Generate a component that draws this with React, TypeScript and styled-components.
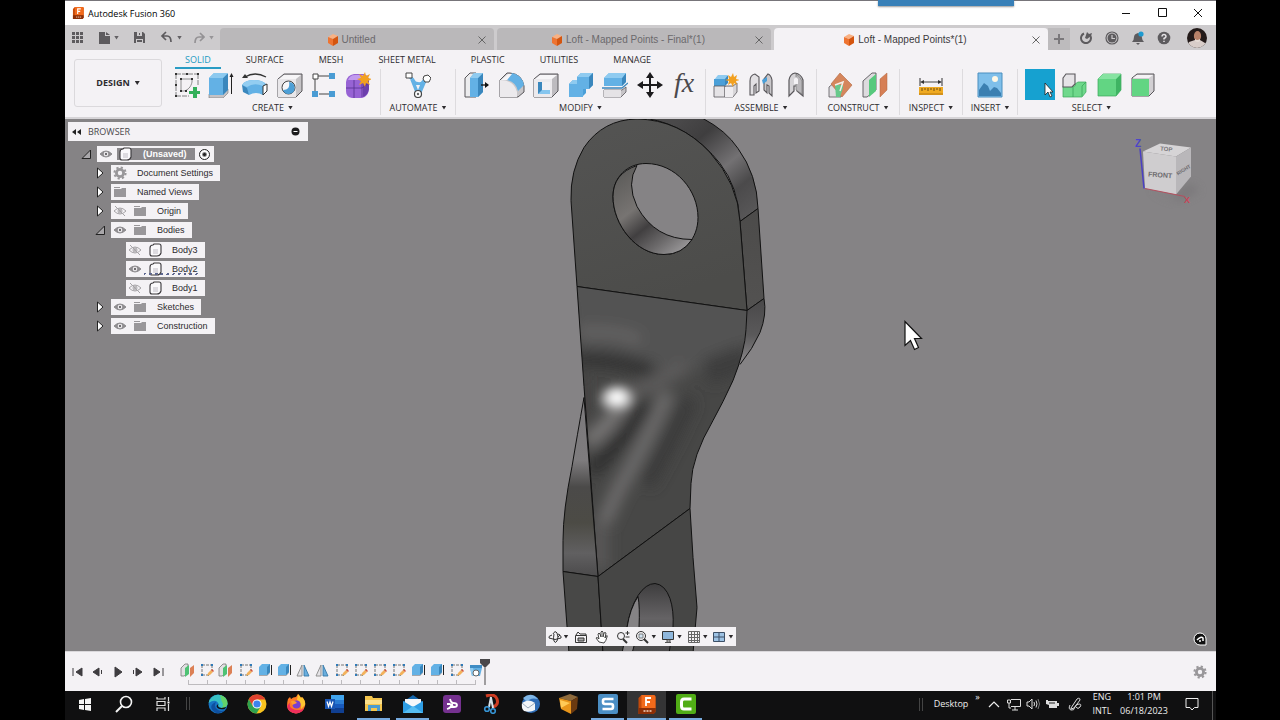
import React from "react";
import styled, { createGlobalStyle } from "styled-components";

const SANS = '"Liberation Sans", Arial, sans-serif';
const SYSTEM = '"Open Sans", "Noto Sans", sans-serif';

const GlobalStyle = createGlobalStyle`
  * { box-sizing: border-box; }
  body { margin: 0; background: #000; font-family: ${SANS}; }
  button { font: inherit; color: inherit; background: none; border: 0; padding: 0; margin: 0; }
  svg { display: block; flex: none; }
  ul { list-style: none; margin: 0; padding: 0; }
`;

const Screen = styled.div`
  display: flex;
  flex-direction: column;
  min-height: 100vh;
  padding: 0 64px 0 65px;
  overflow: hidden;
`;

/* ---------- title bar ---------- */

const TitleBar = styled.header`
  position: relative;
  display: flex;
  align-items: center;
  height: 25px;
  padding: 0 12px 0 7px;
  background: #fff;
  border-top: 1px solid #77757a;
  font: 9px ${SYSTEM};
  color: #000;
`;

const AppTitle = styled.span`
  flex: 1;
  margin-left: 4px;
`;

const SharingTab = styled.div`
  position: absolute;
  top: -1px;
  right: 202px;
  width: 136px;
  height: 6px;
  background: #3880b8;
  box-shadow: 0 1px 2px #0006;
`;

const WindowButtons = styled.div`
  display: flex;
  gap: 24px;
`;

/* ---------- document tabs ---------- */

const DocumentStrip = styled.div`
  display: flex;
  height: 25px;
  background: #cdcbcd;
  color: #636164;
`;

const QuickAccess = styled.div`
  display: flex;
  align-items: center;
  width: 155px;
  padding-left: 7px;
`;

const QuickButton = styled.button<{ $gap: number; $dim?: boolean }>`
  display: flex;
  align-items: center;
  gap: 4px;
  margin-right: ${(p) => p.$gap}px;
  opacity: ${(p) => (p.$dim ? 0.5 : 1)};
`;

const DocumentTabs = styled.div`
  display: flex;
  flex: 1;
  gap: 3px;
  padding-top: 3px;
`;

const DocumentTab = styled.div<{ $active?: boolean }>`
  display: flex;
  flex: 1;
  align-items: center;
  padding: 2px 8px 0 4px;
  border-radius: 4px 4px 0 0;
  background: ${(p) => (p.$active ? "#f4f2f5" : "#bab8ba")};
  color: ${(p) => (p.$active ? "#3c3a3d" : "#6b696c")};
`;

const DocumentName = styled.button`
  display: flex;
  flex: 1;
  align-items: center;
  justify-content: center;
  gap: 3px;
  font-size: 10px;
  line-height: 20px;
  white-space: nowrap;
`;

const Account = styled.div`
  display: flex;
  align-items: center;
  width: 168px;
  gap: 12px;
`;

const NewTab = styled.button`
  display: flex;
  align-items: center;
  justify-content: center;
  width: 22px;
  height: 22px;
  margin: 3px -3px 0 0;
  background: #bdbbbd;
`;

/* ---------- ribbon ---------- */

const Ribbon = styled.section`
  display: flex;
  height: 69px;
  padding: 0 0 0 9px;
  background: #f4f2f5;
  border-bottom: 2px solid #d6d4d7;
  color: #2e2c2f;
  font: 9px/12px ${SYSTEM};
`;

const Workspace = styled.button`
  display: flex;
  align-items: center;
  justify-content: center;
  gap: 5px;
  width: 88px;
  height: 48px;
  margin: 9px 9px 0 0;
  border: 1px solid #dbd9dc;
  border-radius: 3px;
  font-weight: bold;
`;

const RibbonBody = styled.div`
  flex: 1;
`;

const RibbonTabs = styled.nav`
  display: flex;
  gap: 15px;
  height: 19px;
  margin-left: 4px;
`;

const RibbonTab = styled.button<{ $active?: boolean }>`
  padding: 2px 10px 0;
  white-space: nowrap;
  color: ${(p) => (p.$active ? "#1c9ac2" : "inherit")};
  border-bottom: 2px solid ${(p) => (p.$active ? "#2a9cc4" : "transparent")};
`;

const Groups = styled.div`
  display: flex;
`;

const Group = styled.div<{ $width: number; $pad: string; $last?: boolean }>`
  display: flex;
  flex-direction: column;
  align-items: center;
  width: ${(p) => p.$width}px;
  height: 46px;
  padding: ${(p) => p.$pad};
  border-right: 1px solid ${(p) => (p.$last ? "transparent" : "#dddbde")};
`;

const Tools = styled.div<{ $single?: boolean }>`
  display: flex;
  align-self: stretch;
  justify-content: ${(p) => (p.$single ? "center" : "space-between")};
`;

const Tool = styled.button<{ $selected?: boolean }>`
  display: flex;
  align-items: center;
  justify-content: center;
  width: 30px;
  height: 31px;
  background: ${(p) => (p.$selected ? "#16a1d0" : "none")};
`;

const GroupMenu = styled.button`
  display: flex;
  align-items: center;
  gap: 4px;
  height: 15px;
  white-space: nowrap;
`;

const Caret = styled.span`
  width: 5px;
  height: 4px;
  background: currentColor;
  clip-path: polygon(0 0, 100% 0, 50% 100%);
`;

/* ---------- viewport ---------- */

const Viewport = styled.main`
  position: relative;
  flex: 1;
  min-height: 400px;
  padding: 3px;
  background: #858385;
`;

const Scene = styled.svg`
  position: absolute;
  inset: 0;
  width: 100%;
  height: 100%;
`;

const BrowserPanel = styled.aside`
  position: relative;
  width: 240px;
  font: 9px/16px ${SANS};
  color: #2c2a2d;
`;

const BrowserHeader = styled.div`
  display: flex;
  align-items: center;
  gap: 7px;
  height: 19px;
  padding: 0 8px 0 4px;
  background: #f4f2f5;
  font: 9px ${SYSTEM};
  color: #4a484b;
`;

const Grow = styled.span`
  flex: 1;
`;

const Tree = styled.ul`
  display: grid;
  align-content: space-between;
  height: 188px;
  margin-top: 5px;
`;

const TreeRow = styled.li<{ $indent: number }>`
  display: flex;
  align-items: center;
  height: 16px;
  padding-left: ${(p) => p.$indent}px;
`;

const Toggle = styled.button`
  display: flex;
  justify-content: center;
  width: 10px;
  margin-right: 6px;
`;

const Node = styled.div`
  display: flex;
  align-items: center;
  gap: 6px;
  height: 16px;
  padding: 0 7px 0 2px;
  background: #f4f2f5;
  white-space: nowrap;
`;

const NodeLabel = styled.span`
  margin-left: 4px;
`;

const RootLabel = styled.span`
  display: flex;
  align-items: center;
  gap: 11px;
  height: 12px;
  padding: 0 8px 0 1px;
  margin-left: -2px;
  background: #8b898c;
  color: #fff;
  font-weight: bold;
`;

const ActiveRadio = styled.input`
  appearance: none;
  width: 11px;
  height: 11px;
  margin: 0 -3px 0 -2px;
  border: 1px solid #222;
  border-radius: 50%;
  background: radial-gradient(circle, #222 0 1px, #fff 3px);
`;

const NavigationBar = styled.div`
  position: absolute;
  bottom: 5px;
  left: 50%;
  display: flex;
  align-items: center;
  justify-content: space-between;
  width: 190px;
  height: 19px;
  margin-left: -95px;
  padding: 0 2px;
  background: #f4f2f5;
  color: #2b292c;
`;

const NavigationTool = styled.button<{ $plain?: boolean }>`
  display: flex;
  align-items: center;
  gap: 2px;
  padding: 0 ${(p) => (p.$plain ? 1 : 0)}px;
`;

const AssistantButton = styled.button`
  position: absolute;
  right: 9px;
  bottom: 5px;
`;

/* ---------- timeline ---------- */

const Timeline = styled.footer`
  display: flex;
  align-items: center;
  height: 40px;
  padding: 0 9px 0 7px;
  background: #f4f2f5;
  border-top: 1px solid #dad8db;
`;

const Playback = styled.div`
  display: flex;
  gap: 8px;
  margin-right: 16px;
`;

const Features = styled.div`
  display: flex;
  justify-content: space-between;
  width: 304px;
  margin-right: -4px;
`;

const Feature = styled.button`
  display: flex;
  flex-direction: column;
  align-items: center;
  width: 16px;
  padding-top: 4px;

  &::after {
    content: "";
    width: 1px;
    height: 4px;
    margin-top: 2px;
    background: #bdbbbe;
  }
`;

const FeatureTrack = styled.div`
  &::after {
    content: "";
    display: block;
    height: 1px;
    margin: 0 4px 0 8px;
    background: #bdbbbe;
  }
`;

/* ---------- taskbar ---------- */

const Taskbar = styled.nav`
  display: flex;
  height: 29px;
  background: #101011;
  color: #eee;
  font: 9px/14px ${SYSTEM};
`;

const TaskItem = styled.button<{ $open?: boolean; $active?: boolean }>`
  display: flex;
  align-items: center;
  justify-content: center;
  width: 39px;
  height: 29px;
  padding-bottom: 3px;
  border: solid transparent;
  border-width: 0 ${(p) => (p.$active ? 0 : 3)}px;
  background-color: ${(p) => (p.$active ? "#343435" : "transparent")};
  background-clip: padding-box;
  background-image: ${(p) =>
    p.$open ? "linear-gradient(#77aade, #77aade)" : "none"};
  background-repeat: no-repeat;
  background-position: bottom;
  background-size: 100% 2px;
`;

const TaskDivider = styled.span`
  width: 4px;
  height: 13px;
  margin: 6px 8px 0 4px;
  border: solid #444;
  border-width: 0 1px;
`;

const Tray = styled.div`
  display: flex;
  flex: 1;
  align-items: center;
  justify-content: flex-end;
`;

const TrayDivider = styled(TaskDivider)`
  margin: 0 8px 3px 4px;
`;

const TrayItem = styled.button<{ $width: number; $raised?: boolean }>`
  display: flex;
  flex-direction: column;
  align-items: center;
  justify-content: center;
  width: ${(p) => p.$width}px;
  padding-bottom: ${(p) => (p.$raised ? 18 : 4)}px;
  white-space: nowrap;
`;

const ShowDesktop = styled.button`
  width: 4px;
  height: 29px;
  border-left: 1px solid #555;
`;

/* ---------- drawings ---------- */

type IconProps = { w?: number; h?: number; box?: string; children: React.ReactNode };

const Icon = ({ w = 26, h = w, box, children }: IconProps) => (
  <svg width={w} height={h} viewBox={box ?? `0 0 ${w} ${h}`} fill="none" aria-hidden="true">
    {children}
  </svg>
);

const BLUE = "#63b1e5";
const DEEP = "#3a87bd";
const LINE = "#58565a";

const ribbonIcons: Record<string, React.ReactNode> = {
  sketch: (
    <Icon>
      <path d="M2 2h22M2 2v22M24 2v12M2 24h13" stroke="#666" strokeWidth=".8" strokeDasharray="5 1" />
      <path d="M7 19V7h11v3c-1 5-4 8-8 9z" stroke="#777" strokeWidth=".8" />
      <path d="M1 1h2v2H1zM23 1h2v2h-2zM1 23h2v2H1zM6 6h2v2H6zM17 6h2v2h-2zM6 18h2v2H6zM11 18h2v2h-2zM12 1h2v2h-2zM1 12h2v2H1z" fill="#333" />
      <path d="M19 15h4v4h4v3h-4v4h-4v-4h-4v-3h4z" fill="#34b05a" />
    </Icon>
  ),
  extrude: (
    <Icon>
      <path d="M1 22h14l5-5v4l-5 5H1z" fill="#c4c2c5" stroke="#777" strokeWidth=".6" />
      <path d="M1 6l5-5h13v17l-4 5H1z" fill={BLUE} />
      <path d="M15 6l5-5v17l-5 5z" fill={DEEP} />
      <path d="M1 6l5-5h14l-5 5z" fill="#8cc9ef" />
      <path d="M23.500 3v19" stroke="#222" />
      <path d="M21.500 5l2-4 2 4z" fill="#222" />
    </Icon>
  ),
  revolve: (
    <Icon>
      <path d="M3 5Q13-1 24 5" stroke="#333" strokeWidth="1.300" />
      <path d="M0 6l3-4 3 4z" fill="#333" />
      <path d="M0 13q3-5 12-5t13 5l-4 10q-7-4-14 0z" fill={BLUE} />
      <path d="M0 13q3-5 12-5t11 4l-2 2q-9-4-16 1z" fill="#93cdf1" />
      <path d="M0 13l5 3 2 7-6-3z" fill={DEEP} />
      <path d="M21 14l4-2v7l-4 4z" fill="#fff" stroke="#333" />
    </Icon>
  ),
  hole: (
    <Icon>
      <path d="M1 7l6-5h18v17l-6 6H1z" fill="#c5c3c6" stroke={LINE} />
      <path d="M1 7h18v18H1z" fill="#e9e7ea" />
      <path d="M2 7l5-4h17l-5 4z" fill="#f6f5f7" />
      <circle cx="11.500" cy="15.500" r="6.500" fill="#f7f6f8" stroke="#444" />
      <path d="M12 10a6 6 0 1 1-6 8c5 0 7-3 6-8z" fill="#4d9fd6" />
    </Icon>
  ),
  pattern: (
    <Icon>
      <path d="M7 4h12M4 7v12M8 22h10" stroke="#444" />
      <path d="M2 2h5v5H2z" fill="#fff" stroke="#444" />
      <path d="M18 1h6v6h-6zM1 19h6v6H1zM18 19h6v6h-6z" fill="#4a9cd4" />
    </Icon>
  ),
  form: (
    <Icon>
      <path d="M1 10Q2 3 9 2h10q5 2 5 7v8q-1 8-7 9H7q-6-1-6-7z" fill="#9763d4" />
      <path d="M3 8q2-5 7-5h9l-5 5q-6 0-11 0z" fill="#c29bee" />
      <path d="M18 9l5-4q1 2 1 6v6q-1 6-6 8z" fill="#6c3fac" />
      <path d="M1 16h16l7-5M9 8v18M17 9v16" stroke="#57308f" strokeWidth=".8" />
      <path d="M20 0l1 4 4-2-2 4 4 1-4 2 2 4-4-2-1 4-2-4-4 2 2-4-4-2 4-1-2-4 4 2z" fill="#f2a01f" />
    </Icon>
  ),
  automate: (
    <Icon>
      <path d="M3 4q9 4 9 17M23 6q-9 3-9 16" stroke={BLUE} strokeWidth="2.500" />
      <path d="M5 7q8 6 17 1l-6 14h-5z" fill={BLUE} />
      <path d="M11 13h4l-2 5z" fill="#f4f2f5" />
      <path d="M1 1h6v5H1zM19 4l4-1 3 3-2 4h-4l-2-3z" fill="#fff" stroke="#444" />
      <circle cx="13" cy="22" r="3.500" fill="#fff" stroke="#444" strokeWidth="1.200" />
      <circle cx="13" cy="22" r="1.200" fill="#666" />
    </Icon>
  ),
  pressPull: (
    <Icon>
      <path d="M1 6l5-5h6v24H1z" fill="#ececee" stroke={LINE} />
      <path d="M6 6l4-5h9v19l-5 5H6z" fill={BLUE} />
      <path d="M14 6l5-5v19l-5 5z" fill={DEEP} />
      <path d="M6 6l4-5h9l-5 5z" fill="#8fcbf0" />
      <path d="M17 13h7" stroke="#111" strokeWidth="1.300" />
      <path d="M21 10l4 3-4 3z" fill="#111" />
    </Icon>
  ),
  fillet: (
    <Icon>
      <path d="M1 8l7-7h3q12 1 14 13v6l-6 5H1z" fill="#c9c7ca" stroke={LINE} />
      <path d="M1 8q14 0 17 12v5H1z" fill="#eceaed" />
      <path d="M8 8l5-7q10 2 12 12l-6 6Q17 10 8 8z" fill={BLUE} />
      <path d="M2 8l7-6h4L8 8z" fill="#f6f5f7" />
    </Icon>
  ),
  shell: (
    <Icon>
      <path d="M1 7l6-5h18v17l-6 6H1z" fill="#bdbbbf" stroke={LINE} />
      <path d="M1 7h18v18H1z" fill="#eceaed" />
      <path d="M2 7l5-4h17l-5 4z" fill="#f7f6f8" />
      <path d="M5 10h12v12H5z" fill={DEEP} />
      <path d="M9 10h8v8H9z" fill="#f2f0f3" />
      <path d="M5 22l4-4h8v4z" fill="#86c6ef" />
    </Icon>
  ),
  combine: (
    <Icon>
      <path d="M1 12l4-4h4V5l4-4h12v12l-4 4h-3v4l-4 4H1z" fill="#4a9fd8" />
      <path d="M1 12h8V5h12v12h-6v8H1z" fill={BLUE} />
      <path d="M9 5l4-4h12l-4 4zM1 12l4-4h4v4z" fill="#8fcbf0" />
      <path d="M21 5l4-4v12l-4 4z" fill={DEEP} />
    </Icon>
  ),
  split: (
    <Icon>
      <path d="M2 6l5-5h17v9l-4 4H2z" fill={BLUE} />
      <path d="M20 6l4-5v9l-4 4z" fill={DEEP} />
      <path d="M2 6l5-5h17l-4 5z" fill="#8fcbf0" />
      <path d="M0 16h20l6-5" stroke="#3a87bd" strokeWidth="1.300" />
      <path d="M2 18h18l4-3v5l-5 5H2z" fill="#c6c4c7" stroke={LINE} strokeWidth=".8" />
      <path d="M2 18h17v7H2z" fill="#e5e3e6" />
    </Icon>
  ),
  move: (
    <Icon>
      <path d="M13 4v18M4 13h18" stroke="#1b1a1c" strokeWidth="2" />
      <path d="M13 0l4 6H9zM13 26l4-6H9zM0 13l6-4v8zM26 13l-6-4v8z" fill="#1b1a1c" />
    </Icon>
  ),
  parameters: (
    <Icon w={30}>
      <text x="5" y="22" fontFamily="Liberation Serif, serif" fontStyle="italic" fontSize="28" fill="#4b494c">
        fx
      </text>
    </Icon>
  ),
  component: (
    <Icon>
      <path d="M1 8l4-5h9v5l-2 5H1z" fill="#8fcbf0" />
      <path d="M1 7h11v7H1z" fill="#4a9fd8" />
      <path d="M12 7l3-4v8l-3 3z" fill={DEEP} />
      <path d="M1 14h11v11H1z" fill="#e5e3e6" stroke={LINE} strokeWidth=".8" />
      <path d="M12 14h8l4-3v9l-4 5h-8z" fill="#d8d6d9" stroke={LINE} strokeWidth=".8" />
      <path d="M12 15h8v10h-8z" fill="#efedf0" />
      <path d="M20 1l1 4 3-2-1 4 4 1-4 1 1 4-3-2-1 4-2-4-3 2 1-4-4-1 4-1-1-4 3 2z" fill="#f2a01f" />
    </Icon>
  ),
  joint: (
    <Icon>
      <path d="M2 23V9q0-6 5-7l4 3v14l-3 2v-9l-2 2v9z" fill="#e2e0e3" stroke={LINE} strokeWidth="1.100" />
      <path d="M24 24V8q-1-5-4-6l-4 5v11l3 3v-8l2 1v7z" fill="#c9c7ca" stroke={LINE} strokeWidth="1.100" />
      <path d="M14 8l5-3v4l-4 3z" fill="#4a9fd8" />
    </Icon>
  ),
  asBuilt: (
    <Icon>
      <path d="M6 24V8q1-6 6-7 6 1 8 7v16l-6-5v-5h-3v5z" fill="#d6d4d7" stroke={LINE} strokeWidth="1.200" />
      <path d="M13 2v16l6 4V9q-2-5-6-7z" fill="#b9b7ba" stroke="#777" strokeWidth=".7" />
      <path d="M11 7l2-2 2 2v5h-4z" fill="#f4f2f5" />
    </Icon>
  ),
  offsetPlane: (
    <Icon>
      <path d="M1 25V15l6-5h6v15z" fill="#e0dee1" stroke={LINE} strokeWidth=".8" />
      <path d="M12 1l12 12-10 12L3 12z" fill="#d5865c" stroke="#b2673f" strokeWidth=".6" />
      <path d="M7 13h8v3l-3 9h-4z" fill="#67c98b" />
      <path d="M7 13l8-3-3 9" stroke="#f2efe9" strokeWidth="1.500" />
    </Icon>
  ),
  midPlane: (
    <Icon>
      <path d="M1 9l9-8h4v17l-9 7H1z" fill="#dddbde" stroke={LINE} strokeWidth=".9" />
      <path d="M7 8l7-6v17l-7 6z" fill="#57c97d" />
      <path d="M18 7l7-6v17l-7 7z" fill="#d67f55" stroke="#b2673f" strokeWidth=".5" />
    </Icon>
  ),
  measure: (
    <Icon>
      <path d="M2 6v8M24 6v8M4 10h18" stroke="#444" strokeWidth="1.100" />
      <path d="M2 10l4-2v4zM24 10l-4-2v4z" fill="#333" />
      <path d="M1 15h24v8H1z" fill="#efaa22" />
      <path d="M4 16v3M7 16v2M10 16v3M13 16v2M16 16v3M19 16v2M22 16v3" stroke="#6b4b10" />
      <path d="M1 22h24" stroke="#b97a12" />
    </Icon>
  ),
  canvas: (
    <Icon>
      <path d="M1 1h24v24H1z" fill="#7fbfea" stroke="#4b8fbf" />
      <path d="M2 18l5-7 4 3 2 5 4-4 3 1 4 5v3H2z" fill="#3b7fb1" />
      <circle cx="18" cy="7" r="3" fill="#fff8e6" />
    </Icon>
  ),
  select: (
    <Icon>
      <path d="M18 11v12l3-3 2 5 2-1-2-4h3z" fill="#fff" stroke="#222" strokeWidth=".8" />
    </Icon>
  ),
  selectBody: (
    <Icon>
      <path d="M2 14h12v-2l3-2h8v10l-4 5H2z" fill="#6fd88b" stroke="#3aa65a" strokeWidth=".7" />
      <path d="M2 6l3-4h9v10l-3 3H2z" fill="#e5e3e6" stroke={LINE} strokeWidth="1.100" />
      <path d="M12 15v10M21 14l4-4M21 14v10" stroke="#3aa65a" strokeWidth=".8" />
    </Icon>
  ),
  selectSolid: (
    <Icon>
      <path d="M2 7l5-5h18v16l-5 6H2z" fill="#62d583" stroke="#3aa65a" strokeWidth=".7" />
      <path d="M20 7l5-5v16l-5 6z" fill="#3fb463" />
      <path d="M2 7l5-5h18l-5 5z" fill="#86e3a1" />
    </Icon>
  ),
  selectFace: (
    <Icon>
      <path d="M2 6l5-4h17v17l-5 5H2z" fill="#d2d0d3" stroke={LINE} />
      <path d="M3 6l4-3h16l-4 3z" fill="#f5f3f6" />
      <path d="M2 7h17v17H2z" fill="#62d583" />
    </Icon>
  ),
};

const CubeMark = () => (
  <Icon w={12}>
    <path d="M1 3l5-3 5 2-5 3z" fill="#f9b183" />
    <path d="M1 3l5 2v7L1 9z" fill="#ee7431" />
    <path d="M6 5l5-3v7l-5 3z" fill="#d4550f" />
  </Icon>
);

const Cross = ({ size = 8, color = "#666" }) => (
  <Icon w={size} box="0 0 8 8">
    <path d="M.5.5l7 7M7.500.5l-7 7" stroke={color} strokeWidth="1" />
  </Icon>
);

const FusionMark = ({ size = 12 }) => (
  <Icon w={size} box="0 0 18 19">
    <path d="M1 3l3-3h12q2 0 2 2v15l-2 2H1z" fill="#c44a0a" />
    <path d="M4 0h12q2 0 2 2v11H4z" fill="#f26a1b" />
    <path d="M1 13h17v4l-2 2H1z" fill="#8d2f06" />
    <path d="M8.500 11V3h5M8.500 7h4" stroke="#fff" strokeWidth="1.800" />
    <path d="M6 16h8" stroke="#f4d9c8" strokeWidth="1.400" strokeDasharray="2 1" />
  </Icon>
);

const GearMark = ({ size = 14 }) => (
  <Icon w={size} box="0 0 14 14">
    <circle cx="7" cy="7" r="3.600" stroke="#99979a" strokeWidth="2.800" />
    <circle cx="7" cy="7" r="5.600" stroke="#99979a" strokeWidth="2" strokeDasharray="2.200 2.198" />
  </Icon>
);

const Eye = ({ off = false }) => (
  <Icon w={14} h={12}>
    <path
      d="M1 6q6-6 12 0q-6 6-12 0z"
      fill={off ? "none" : "#8e8c8f"}
      stroke={off ? "#a6a4a7" : "#8e8c8f"}
    />
    <circle cx="7" cy="6" r={off ? 2 : 2.300} fill={off ? "none" : "#f4f2f5"} stroke={off ? "#a6a4a7" : "none"} />
    <circle cx="7" cy="6" r="1.200" fill={off ? "#b5b3b6" : "#6d6b6e"} />
    {off && <path d="M2 1l10 10" stroke="#a6a4a7" />}
  </Icon>
);

const Folder = () => (
  <Icon w={14} h={12}>
    <path d="M1 1h6v1H1zM1 3h7l1-1h4v9H1z" fill="#99979a" />
  </Icon>
);

const BodyMark = () => (
  <Icon w={14}>
    <path
      d="M2 5q0-3 3-3l1-1h5q2 0 2 2v7q-1 3-4 3H4q-2 0-2-2z"
      fill="#faf9fb"
      stroke="#3a383b"
      strokeWidth="1.100"
    />
    <path d="M5 6h5v5H5z" fill="#dddbe0" />
  </Icon>
);

const HoverTrace = styled.span`
  align-self: flex-end;
  width: 54px;
  height: 2px;
  margin: 0 0 2px -60px;
  background: repeating-linear-gradient(120deg, #5c6690 0 2px, transparent 2px 5px);
`;

const ArrowClosed = () => (
  <Icon w={8} h={12}>
    <path d="M1.500 1v10L7 6z" fill="#fff" stroke="#222" />
  </Icon>
);

const ArrowOpen = () => (
  <Icon w={10}>
    <path d="M9.500 1v8.500H1z" fill="#a9a7aa" stroke="#222" />
  </Icon>
);

const featureIcons: Record<string, React.ReactNode> = {
  plane: (
    <Icon w={16}>
      <path d="M1 6l4-4h3v9l-4 3H1z" fill="#e2e0e3" stroke="#777" strokeWidth=".8" />
      <path d="M5 6l4-3v9l-4 3z" fill="#4ec274" />
      <path d="M10 6l4-3v8l-4 4z" fill="#dc8055" />
    </Icon>
  ),
  sketch: (
    <Icon w={16}>
      <path d="M3 3h10M3 3v9M13 3v6M3 13h6" stroke="#777" strokeDasharray="3 1" />
      <path d="M2 2h2v2H2zM12 2h2v2h-2zM2 12h2v2H2zM9 13h1v1H9z" fill="#2f7ab8" />
      <path d="M8 14l1-3 3-3 2 2-3 3z" fill="#f3b25c" />
      <path d="M12 8l1-1 2 2-1 1z" fill="#d4543a" />
    </Icon>
  ),
  extrude: (
    <Icon w={16}>
      <path d="M2 12h8l3-3v2l-3 3H2z" fill="#a9a7aa" />
      <path d="M2 5l3-3h8v8l-3 3H2z" fill={BLUE} />
      <path d="M10 5l3-3v8l-3 3z" fill={DEEP} />
      <path d="M14.500 3v10" stroke="#222" />
    </Icon>
  ),
  mirror: (
    <Icon w={16}>
      <path d="M7 3v11H2z" fill="#e5e3e6" stroke="#888" strokeWidth=".9" />
      <path d="M9 3v11h5z" fill="#6aaede" stroke="#3579a8" strokeWidth=".9" />
    </Icon>
  ),
  loft: (
    <Icon w={16}>
      <path d="M2 3h12v3l-2 8H4L2 6z" fill={BLUE} />
      <path d="M2 3h12v3H2z" fill="#3f8cc4" />
      <path d="M2 6l2 8h3L5 6z" fill="#8fcbf0" />
      <circle cx="8" cy="11" r="3" fill="#fff" stroke="#666" />
    </Icon>
  ),
};

const taskIcons: Record<string, React.ReactNode> = {
  Start: (
    <Icon w={14}>
      <path d="M1 3l5-1v5H1zM7 2l6-1v6H7zM1 8h5v5l-5-1zM7 8h6v6l-6-1z" fill="#f4f4f4" />
    </Icon>
  ),
  Search: (
    <Icon w={20}>
      <circle cx="12" cy="8" r="5.500" stroke="#f4f4f4" strokeWidth="1.600" />
      <path d="M8 12l-6 6" stroke="#f4f4f4" strokeWidth="2" />
    </Icon>
  ),
  "Task view": (
    <Icon w={16}>
      <path d="M2 1v2h8V1M2 15v-3h8v3M2 5.500h8v4H2zM13.500 1v4M13.500 8v7" stroke="#ddd" strokeWidth="1.200" />
      <path d="M12.500 5.500h2v2h-2z" fill="#fff" />
    </Icon>
  ),
  Edge: (
    <Icon w={20}>
      <circle cx="10" cy="10" r="9.500" fill="#1673c4" />
      <path d="M.6 9A9.500 9.500 0 0 1 19.500 10q-1 4-6 4-4-1-3-4Q8 4 .6 9z" fill="#38c1c4" />
      <path d="M12 1q8 2 7.500 9-1 4-6 4 3-3 0-7z" fill="#62d36a" />
      <path d="M8 8q-3 5 2 8 4 2 7 0-5 5-10 2.500Q-1 12 8 8z" fill="#0e4f9f" />
      <path d="M10.500 9.500q-2 4 3 4.500l5-1-2 2q-7 1-8-3z" fill="#101011" />
    </Icon>
  ),
  Chrome: (
    <Icon w={20}>
      <circle cx="10" cy="10" r="9.500" fill="#f9c31f" />
      <path d="M1.800 5.200A9.500 9.500 0 0 1 18.300 5.500H10L6 12.500z" fill="#e0412f" />
      <path d="M1.800 5.200A9.500 9.500 0 0 0 9.500 19.500l4.200-7H6z" fill="#2ea24f" />
      <circle cx="10" cy="10" r="4.600" fill="#fff" />
      <circle cx="10" cy="10" r="3.600" fill="#3d83ec" />
    </Icon>
  ),
  Firefox: (
    <Icon w={20}>
      <path d="M2 5l2-2 1 2q2-2 5-2l2-3q2 2 3 4l1-1q4 4 3 9-2 7-9 7.500Q2 19 1 12q0-4 1-7z" fill="#ff7b26" />
      <path d="M12 0q2 2 3 4l1-1q4 4 3 8l-4 4q1-7-4-9z" fill="#ffc531" />
      <path d="M1 12q1 7 9 7.500 6-.5 8-5-6 3-12 0-3-2-2-6z" fill="#ef2f5c" />
      <circle cx="10.500" cy="10.500" r="4" fill="#7a3fd0" />
      <path d="M5 7q4-1 6 2l-5 2z" fill="#ff9b2f" />
    </Icon>
  ),
  Word: (
    <Icon w={20}>
      <path d="M6 1h13v18H6z" fill="#2b7cd3" />
      <path d="M6 1h13v5H6z" fill="#41a5ee" />
      <path d="M6 10h13v4H6z" fill="#185abd" />
      <path d="M6 14h13v5H6z" fill="#103f91" />
      <path d="M0 5h10v10H0z" fill="#1a56b4" />
      <path d="M2 7.500l1.500 5L5 8l1.500 4.500L8 7.500" stroke="#fff" strokeWidth="1.200" />
    </Icon>
  ),
  "File Explorer": (
    <Icon w={20}>
      <path d="M1 2h7l1 2h9v13H1z" fill="#f4c64f" />
      <path d="M1 6h17v4H1z" fill="#fbe08c" />
      <path d="M4 11h12v6h-3v-3H7v3H4z" fill="#4a9cd1" />
    </Icon>
  ),
  Mail: (
    <Icon w={20}>
      <path d="M0 8l10-7 10 7z" fill="#1567ad" />
      <path d="M2 5h16v8H2z" fill="#f5f7fa" />
      <path d="M0 7l10 6 10-6v12H0z" fill="#2f9fe6" />
      <path d="M0 19l10-7 10 7z" fill="#57bdf2" />
    </Icon>
  ),
  Dictation: (
    <Icon w={18}>
      <rect width="18" height="18" rx="3" fill="#75318f" />
      <path d="M7 4q1 4 3 4 4 0 4 2t-3 2q-2 0-2-3-1 4-5 5M4 9h3q2 1 2 4" stroke="#fff" strokeWidth="1.800" />
    </Icon>
  ),
  Snip: (
    <Icon w={18} h={20}>
      <path d="M4 2q9-3 11 3t-4 8" stroke="#cf3c22" strokeWidth="3" />
      <path d="M9 3l-2 10M9 4l2 10" stroke="#d9e3ea" strokeWidth="2" />
      <circle cx="5" cy="15" r="2.300" stroke="#3795d6" strokeWidth="1.600" />
      <circle cx="11" cy="17" r="2.300" stroke="#3795d6" strokeWidth="1.600" />
    </Icon>
  ),
  Thunderbird: (
    <Icon w={20}>
      <circle cx="11" cy="10" r="9" fill="#2e6cb5" />
      <path d="M3 4q8-7 15 1-8-2-11 3z" fill="#7fb6e6" />
      <path d="M2 9q7-5 13 0v7q-5 3-11 1-3-3-2-8z" fill="#f2f5f8" />
      <path d="M2 9l6 5 7-5" stroke="#98a9ba" />
    </Icon>
  ),
  Vault: (
    <Icon w={20}>
      <path d="M0 4l11-4 8 3-7 4z" fill="#8e6a3c" />
      <path d="M0 4l12 3v13L2 15z" fill="#e8951a" />
      <path d="M12 7l7-4-1 12-6 5z" fill="#6b3a10" />
      <path d="M1 6l10 3-9 5z" fill="#ffca57" />
    </Icon>
  ),
  Snagit: (
    <Icon w={20}>
      <rect width="20" height="20" rx="2" fill="#4b8ec4" />
      <path d="M15.500 5H7q-2 0-2 2v1q0 2 2 2h6q2 0 2 2v1q0 2-2 2H4.500" stroke="#fff" strokeWidth="2.600" />
    </Icon>
  ),
  "Fusion 360": <FusionMark size={19} />,
  Camtasia: (
    <Icon w={20}>
      <rect width="20" height="20" rx="2" fill="#51ad16" />
      <path d="M15.500 5H8Q5.500 5 5.500 8v4q0 3 2.500 3h7.500" stroke="#fff" strokeWidth="3" />
    </Icon>
  ),
};

/* The twisted lever, the cube and the pointer are drawn in one shared space. */
const Model = () => (
  <Scene viewBox="65 118 1151 533" preserveAspectRatio="xMidYMid slice" aria-label="Model view">
    <defs>
      <linearGradient id="rim" gradientUnits="userSpaceOnUse" x1="680" y1="118" x2="760" y2="215">
        <stop offset="0" stopColor="#4a494a" />
        <stop offset=".22" stopColor="#3f3e3f" />
        <stop offset=".52" stopColor="#737173" />
        <stop offset=".72" stopColor="#4b4a4b" />
        <stop offset="1" stopColor="#5b5a5b" />
      </linearGradient>
      <linearGradient id="bore" gradientUnits="userSpaceOnUse" x1="622" y1="165" x2="690" y2="250">
        <stop offset="0" stopColor="#5a5957" />
        <stop offset=".38" stopColor="#777472" />
        <stop offset=".58" stopColor="#413f40" />
        <stop offset=".78" stopColor="#6d6b6c" />
        <stop offset="1" stopColor="#a3a1a3" />
      </linearGradient>
      <linearGradient id="face" x1="0" y1="0" x2=".3" y2="1">
        <stop offset="0" stopColor="#545453" />
        <stop offset="1" stopColor="#4c4c4a" />
      </linearGradient>
      <linearGradient id="side" x1="0" y1="0" x2="0" y2="1">
        <stop offset="0" stopColor="#4c4b4a" />
        <stop offset="1" stopColor="#535251" />
      </linearGradient>
      <linearGradient id="curl" x1="0" y1="0" x2="0" y2="1">
        <stop offset="0" stopColor="#494849" />
        <stop offset=".55" stopColor="#5a595a" />
        <stop offset="1" stopColor="#8b898b" />
      </linearGradient>
      <linearGradient id="sliver" x1="0" y1="0" x2="0" y2="1">
        <stop offset="0" stopColor="#7b797b" />
        <stop offset=".35" stopColor="#7e7c7e" />
        <stop offset=".5" stopColor="#4b4a49" />
        <stop offset=".7" stopColor="#4c4b45" />
        <stop offset=".87" stopColor="#616061" />
        <stop offset="1" stopColor="#4b4a4b" />
      </linearGradient>
      <linearGradient id="lower-bore" x1="0" y1="0" x2="0" y2="1">
        <stop offset="0" stopColor="#3e3d3e" />
        <stop offset=".5" stopColor="#656365" />
        <stop offset="1" stopColor="#4a494a" />
      </linearGradient>
      <filter id="soft" filterUnits="userSpaceOnUse" x="540" y="260" width="260" height="340">
        <feGaussianBlur stdDeviation="7" />
      </filter>
      <filter id="glint" x="-50%" y="-50%" width="200%" height="200%">
        <feGaussianBlur stdDeviation="5" />
      </filter>
      <clipPath id="twist">
        <path d="M577 286L747 310L746 329Q745 350 733 380Q723 402 713 420Q692 456 691 483L690 508L598 576L584 386Z" />
      </clipPath>
    </defs>

    <g stroke="#111" strokeWidth="1" strokeLinejoin="round">
      <path d="M647 118H703Q726 130 738 148Q757 174 758 208L740 221Q738 186 720 163Q690 125 647 118Z" fill="url(#rim)" />
      <path d="M740 221L758 208L764 298L747 310Z" fill="url(#side)" />
      <path d="M747 310L764 298Q767 314 760 332Q753 348 740 364Q747 340 747 310Z" fill="url(#curl)" stroke="none" />
      <path d="M747 310L764 298Q767 314 760 332Q753 348 740 364" fill="none" />
      <path
        d="M577 286L571 200Q570 170 584 147Q603 119 637 118.500Q679 119 710 152Q738 183 740 221L747 310ZM613 196C613 224 636 254 664 254C684 254 698 238 698 217C698 190 676 163 646 163C627 163 613 177 613 196Z"
        fill="url(#face)"
        fillRule="evenodd"
      />
      <path d="M637 165Q626 183 637 206Q655 239 692 239Q682 254 664 254C636 254 613 224 613 196Q613 173 637 165Z" fill="url(#bore)" />
    </g>

    <g clipPath="url(#twist)">
      <path d="M560 280h210v300H560z" fill="#474746" />
      <g filter="url(#soft)">
        <path d="M560 265h210v70l-60 34h-40l-90-10z" fill="#535252" />
        <path d="M575 332q40-4 66 8" stroke="#636262" strokeWidth="12" />
        <path d="M574 358q40-2 78 12" stroke="#323130" strokeWidth="15" />
        <path d="M578 376v50" stroke="#424141" strokeWidth="16" />
        <path d="M620 398q24-10 66-32" stroke="#5d5c5c" strokeWidth="14" />
        <path d="M620 404q-10 22-34 38" stroke="#7b7979" strokeWidth="14" />
        <path d="M650 402q-26 38-60 70" stroke="#2e2d2e" strokeWidth="14" />
        <path d="M668 392q-22 50-50 98l-20 44" stroke="#6e6d6d" strokeWidth="14" />
        <path d="M690 398q-18 40-44 86" stroke="#3b3a3a" strokeWidth="16" />
        <path d="M706 372l42-16" stroke="#3d3d3c" strokeWidth="26" />
        <path d="M600 520v50" stroke="#5a5959" strokeWidth="16" />
      </g>
      <g filter="url(#glint)">
        <ellipse cx="617" cy="398" rx="17" ry="13" fill="#a9a8a8" />
        <ellipse cx="617" cy="397" rx="9" ry="7" fill="#fff" />
      </g>
    </g>

    <g stroke="#111" strokeWidth="1" strokeLinejoin="round">
      <path d="M577 286L747 310L746 329Q745 350 733 380Q723 402 713 420Q692 456 691 483L690 508L598 576L584 386Z" fill="none" />
      <path d="M584 397Q577 436 572 466Q563 510 563 540V571L598 576Z" fill="url(#sliver)" />
      <path d="M563 571L598 576L603 653H569Z" fill="#484847" />
      <path d="M598 576L690 508L693 557L697 607L693 653H603Z" fill="#464645" />
      <path d="M627 627Q630 608 638 595Q646 583 655 583Q665 584 670 598Q674 610 673 627L669 653H626Z" fill="url(#lower-bore)" />
      <path d="M638 596Q640 606 639 627L632 653H622L627 627Q630 608 638 596Z" fill="#858385" />
    </g>

    <g>
      <path d="M1147 189l22 9 22-14 8 6-20 10z" fill="#6f6d70" opacity=".6" filter="url(#glint)" />
      <path d="M1143 151l17-8 31 4-15 9z" fill="#d6d4d6" />
      <path d="M1143 151l33 5v38l-31-6z" fill="#cfcdcf" />
      <path d="M1176 156l15-9v29l-15 18z" fill="#b9b7ba" />
      <path d="M1140 148l4 40" stroke="#4a3fc4" strokeWidth="1.500" />
      <path d="M1145 188l40 8" stroke="#b2505f" strokeWidth="1.200" />
      <g fontFamily="Liberation Sans, sans-serif" fontWeight="bold">
        <text x="1135" y="146" fontSize="10" fill="#4d45c8">Z</text>
        <text x="1184" y="202" fontSize="9" fill="#c84458">X</text>
        <text fontSize="7" fill="#6d6b6e" transform="translate(1148 176) rotate(4)">FRONT</text>
        <text fontSize="6" fill="#77757a" transform="translate(1160 150) rotate(6)">TOP</text>
        <text fontSize="5" fill="#6d6b6e" transform="translate(1178 175) rotate(-32)">RIGHT</text>
      </g>
    </g>

    <path d="M905 321v24l5.500-5 4 9 4-2-4-9h7z" fill="#fff" stroke="#111" strokeWidth="1.200" />
  </Scene>
);

/* ---------- data ---------- */

type GroupSpec = { name: string; width: number; pad: string; tools: string[] };

const groups: GroupSpec[] = [
  { name: "CREATE", width: 210, pad: "0 7px 0 1px", tools: ["sketch", "extrude", "revolve", "hole", "pattern", "form"] },
  { name: "AUTOMATE", width: 75, pad: "0", tools: ["automate"] },
  { name: "MODIFY", width: 250, pad: "0 6px", tools: ["pressPull", "fillet", "shell", "combine", "split", "move", "parameters"] },
  { name: "ASSEMBLE", width: 111, pad: "0 5px", tools: ["component", "joint", "asBuilt"] },
  { name: "CONSTRUCT", width: 83, pad: "0 9px", tools: ["offsetPlane", "midPlane"] },
  { name: "INSPECT", width: 63, pad: "0", tools: ["measure"] },
  { name: "INSERT", width: 55, pad: "0", tools: ["canvas"] },
  { name: "SELECT", width: 144, pad: "0 3px 0 7px", tools: ["select", "selectBody", "selectSolid", "selectFace"] },
];

const ribbonTabs = ["SOLID", "SURFACE", "MESH", "SHEET METAL", "PLASTIC", "UTILITIES", "MANAGE"];

type NodeSpec = { label: string; level: 1 | 2; open?: boolean; eye?: "on" | "off"; kind: "gear" | "folder" | "body" };

const nodes: NodeSpec[] = [
  { label: "Document Settings", level: 1, kind: "gear" },
  { label: "Named Views", level: 1, kind: "folder" },
  { label: "Origin", level: 1, eye: "off", kind: "folder" },
  { label: "Bodies", level: 1, eye: "on", kind: "folder", open: true },
  { label: "Body3", level: 2, eye: "off", kind: "body" },
  { label: "Body2", level: 2, eye: "on", kind: "body" },
  { label: "Body1", level: 2, eye: "off", kind: "body" },
  { label: "Sketches", level: 1, eye: "on", kind: "folder" },
  { label: "Construction", level: 1, eye: "on", kind: "folder" },
];

const features = [
  "plane", "sketch", "plane", "sketch", "extrude", "extrude", "mirror", "mirror",
  "sketch", "sketch", "sketch", "sketch", "extrude", "extrude", "sketch", "loft",
];

const playback: [string, string][] = [
  ["Go to start", "M1 2v8M10 2v8L4 6z"],
  ["Step back", "M7 2v8L1 6zM9.500 4v4"],
  ["Play", "M3 1v10l7-5z"],
  ["Step forward", "M4 2v8l6-4zM1.500 4v4"],
  ["Go to end", "M11 2v8M2 2v8l6-4z"],
];

const openApps = ["File Explorer", "Mail", "Snagit", "Fusion 360", "Camtasia"];

/* ---------- page sections ---------- */

const Header = () => (
  <TitleBar>
    <FusionMark size={12} />
    <AppTitle>Autodesk Fusion 360</AppTitle>
    <SharingTab />
    <WindowButtons>
      <button aria-label="Minimize">
        <Icon w={12}><path d="M2 6.500h8" stroke="#111" /></Icon>
      </button>
      <button aria-label="Maximize">
        <Icon w={12}><path d="M2.500 1.500h8v8h-8z" stroke="#111" /></Icon>
      </button>
      <button aria-label="Close window">
        <Icon w={12}><path d="M2 2l8 8M10 2l-8 8" stroke="#111" /></Icon>
      </button>
    </WindowButtons>
  </TitleBar>
);

const Documents = () => (
  <DocumentStrip>
    <QuickAccess>
      <QuickButton $gap={14} aria-label="Data panel">
        <Icon w={12}>
          <path d="M0 0h3v3H0zM4 0h3v3H4zM8 0h3v3H8zM0 4h3v3H0zM4 4h3v3H4zM8 4h3v3H8zM0 8h3v3H0zM4 8h3v3H4zM8 8h3v3H8z" fill="#5d5b5e" />
        </Icon>
      </QuickButton>
      <QuickButton $gap={14} aria-label="File">
        <Icon w={12} h={14}><path d="M1 1h6v4h5v8H1zM8 1l4 3H8z" fill="#5d5b5e" /></Icon>
        <Caret />
      </QuickButton>
      <QuickButton $gap={14} aria-label="Save">
        <Icon w={13}>
          <path d="M1 1h9l2 2v9H1z" fill="#5d5b5e" />
          <path d="M4 1h5v4H4zM3 8h7v4H3z" fill="#cdcbcd" />
          <path d="M6 2h1v2H6zM4 9h5v2H4z" fill="#5d5b5e" />
        </Icon>
      </QuickButton>
      <QuickButton $gap={11} aria-label="Undo">
        <Icon w={13}><path d="M6 1L2 5l4 4M2 5h5q4 0 4 6" stroke="#5d5b5e" strokeWidth="1.700" /></Icon>
        <Caret />
      </QuickButton>
      <QuickButton $gap={0} $dim aria-label="Redo">
        <Icon w={12}><path d="M7 1l4 4-4 4M11 5H6q-4 0-4 6" stroke="#5d5b5e" strokeWidth="1.700" /></Icon>
        <Caret />
      </QuickButton>
    </QuickAccess>
    <DocumentTabs>
      {["Untitled", "Loft - Mapped Points - Final*(1)", "Loft - Mapped Points*(1)"].map((name, i) => (
        <DocumentTab key={name} $active={i === 2}>
          <DocumentName><CubeMark />{name}</DocumentName>
          <button aria-label={`Close ${name}`}><Cross /></button>
        </DocumentTab>
      ))}
    </DocumentTabs>
    <Account>
      <NewTab aria-label="New design">
        <Icon w={12}><path d="M6 1v10M1 6h10" stroke="#7a787b" strokeWidth="2" /></Icon>
      </NewTab>
      <button aria-label="Extensions">
        <Icon w={14}>
          <path d="M5 2.500A5 5 0 1 0 11.500 5" stroke="#5d5b5e" strokeWidth="2" />
          <path d="M6 7l2-6 2 2 3-1-1 3-4 3z" fill="#5d5b5e" />
        </Icon>
      </button>
      <button aria-label="Job status">
        <Icon w={14}>
          <circle cx="7" cy="7" r="6" stroke="#5d5b5e" strokeWidth="1.200" />
          <circle cx="7" cy="7" r="4.500" fill="#5d5b5e" />
          <path d="M7 4v3.500h3" stroke="#cdcbcd" strokeWidth="1.200" />
        </Icon>
      </button>
      <button aria-label="Notifications">
        <Icon w={14}>
          <path d="M1 11q2-2 2-5 0-3 4-4 4 1 4 5 0 2 2 4zM5 12h4l-2 2z" fill="#5d5b5e" />
          <circle cx="10" cy="3" r="2.600" fill="#1d9ad0" />
        </Icon>
      </button>
      <button aria-label="Help">
        <Icon w={14}>
          <circle cx="7" cy="7" r="6.300" fill="#5d5b5e" />
          <path d="M5 5.500Q5.200 3.500 7 3.500t2 2q0 1-2 2v1M7 9.700v1.300" stroke="#e3e1e4" strokeWidth="1.500" />
        </Icon>
      </button>
      <button aria-label="Account">
        <svg width="24" height="20" viewBox="0 0 24 20" fill="none">
          <clipPath id="avatar"><circle cx="14" cy="10" r="10" /></clipPath>
          <g clipPath="url(#avatar)">
            <path d="M4 0h20v20H4z" fill="#231a19" />
            <path d="M4 20l2-6 6-2h5l5 3 1 5z" fill="#d8cdc9" />
            <ellipse cx="14.500" cy="8" rx="3.600" ry="5" fill="#b98269" />
            <path d="M12 11q2 2 5 0v2q-2 2-5 0z" fill="#e6dcd6" />
          </g>
        </svg>
      </button>
    </Account>
  </DocumentStrip>
);

const Toolbar = () => (
  <Ribbon>
    <Workspace>DESIGN<Caret /></Workspace>
    <RibbonBody>
      <RibbonTabs>
        {ribbonTabs.map((tab, i) => (
          <RibbonTab key={tab} $active={i === 0}>{tab}</RibbonTab>
        ))}
      </RibbonTabs>
      <Groups>
        {groups.map((group, i) => (
          <Group key={group.name} $width={group.width} $pad={group.pad} $last={i === groups.length - 1}>
            <Tools $single={group.tools.length === 1}>
              {group.tools.map((tool) => (
                <Tool key={tool} $selected={tool === "select"} aria-label={tool}>
                  {ribbonIcons[tool]}
                </Tool>
              ))}
            </Tools>
            <GroupMenu>{group.name}<Caret /></GroupMenu>
          </Group>
        ))}
      </Groups>
    </RibbonBody>
  </Ribbon>
);

const Browser = () => (
  <BrowserPanel>
    <BrowserHeader>
      <button aria-label="Collapse browser">
        <Icon w={9} h={8}><path d="M4 1v6L0 4zM9 1v6L5 4z" fill="#222" /></Icon>
      </button>
      <Grow>BROWSER</Grow>
      <button aria-label="Panel options">
        <Icon w={9}><circle cx="4.500" cy="4.500" r="4" fill="#1d1c1e" /><path d="M2.500 4.500h4" stroke="#fff" /></Icon>
      </button>
    </BrowserHeader>
    <Tree>
      <TreeRow $indent={13}>
        <Toggle aria-label="Collapse document"><ArrowOpen /></Toggle>
        <Node>
          <Eye />
          <RootLabel><BodyMark />(Unsaved)</RootLabel>
          <ActiveRadio type="radio" name="active-component" aria-label="Activate (Unsaved)" defaultChecked />
        </Node>
      </TreeRow>
      {nodes.map((node) => (
        <TreeRow key={node.label} $indent={node.level === 1 ? 27 : 58}>
          {node.level === 1 && (
            <Toggle aria-label={`Toggle ${node.label}`}>{node.open ? <ArrowOpen /> : <ArrowClosed />}</Toggle>
          )}
          <Node>
            {node.eye && <Eye off={node.eye === "off"} />}
            {node.kind === "gear" && <GearMark />}
            {node.kind === "folder" && <Folder />}
            {node.kind === "body" && <BodyMark />}
            <NodeLabel>{node.label}</NodeLabel>
            {node.label === "Body2" && <HoverTrace />}
          </Node>
        </TreeRow>
      ))}
    </Tree>
  </BrowserPanel>
);

const Navigation = () => (
  <NavigationBar>
    <NavigationTool aria-label="Orbit">
      <Icon w={14}>
        <path d="M5 4q2-4 4-1 2 4 0 8-2 3-3 0-1-3 0-7" stroke="#333" />
        <path d="M11 5q3 1 2 3-6 3-12 0-1-2 3-3M10 4l2 1-2 2" stroke="#333" />
      </Icon>
      <Caret />
    </NavigationTool>
    <NavigationTool $plain aria-label="Look at">
      <Icon w={14}>
        <path d="M1.500 5.500h11v7h-11zM2 5l2-3 2 2M6 4h6v1" stroke="#333" />
        <path d="M4 8h6v3H4z" fill="#aaa" stroke="#333" />
      </Icon>
    </NavigationTool>
    <NavigationTool $plain aria-label="Pan">
      <Icon w={14}>
        <path d="M4 12L1 8q0-1 2 0l1 1-1-5q1-2 2 0l1 3V2q1-2 2 0v5l1-4q1-1 2 0l-1 5 1-2q2-1 1 1-1 4-3 6z" fill="#fff" stroke="#333" strokeWidth=".9" />
      </Icon>
    </NavigationTool>
    <NavigationTool $plain aria-label="Zoom">
      <Icon w={14}>
        <circle cx="5" cy="6" r="3.500" stroke="#333" />
        <path d="M7 9l4 4" stroke="#333" strokeWidth="2" />
        <path d="M9.500 3h4M11.500 1v4M9.500 7h4" stroke="#333" />
      </Icon>
    </NavigationTool>
    <NavigationTool aria-label="Fit">
      <Icon w={14}>
        <circle cx="6" cy="6" r="4.500" stroke="#333" />
        <path d="M4 4h4v4H4z" fill="#d3e4f2" stroke="#666" strokeWidth=".8" />
        <path d="M9 9l4 4" stroke="#333" strokeWidth="2" />
      </Icon>
      <Caret />
    </NavigationTool>
    <NavigationTool aria-label="Display settings">
      <Icon w={14}>
        <path d="M1.500 1.500h11v8h-11z" fill="#8fb7dc" stroke="#333" />
        <path d="M6 10h3v2H6zM4 12.500h6" stroke="#555" />
      </Icon>
      <Caret />
    </NavigationTool>
    <NavigationTool aria-label="Grid and snaps">
      <Icon w={14}>
        <path d="M1.500 1.500h11v11h-11zM4.500 1v12M7.500 1v12M10.500 1v12M1 4.500h12M1 7.500h12M1 10.500h12" stroke="#666" />
      </Icon>
      <Caret />
    </NavigationTool>
    <NavigationTool aria-label="Viewports">
      <Icon w={14}>
        <path d="M1.500 2.500h11v9h-11z" fill="#9dc2e4" stroke="#3c4f66" />
        <path d="M7 2v10M1 7h12" stroke="#3c4f66" />
      </Icon>
      <Caret />
    </NavigationTool>
  </NavigationBar>
);

const History = () => (
  <Timeline>
    <Playback>
      {playback.map(([label, d]) => (
        <button key={label} aria-label={label}>
          <Icon w={12}><path d={d} fill="#3f3d40" stroke="#3f3d40" /></Icon>
        </button>
      ))}
    </Playback>
    <FeatureTrack>
      <Features>
        {features.map((name, i) => (
          <Feature key={i} aria-label={`${name} ${i + 1}`}>{featureIcons[name]}</Feature>
        ))}
      </Features>
    </FeatureTrack>
    <Icon w={10} h={28}>
      <path d="M0 1h10v4L6 9H4L0 5zM4.500 8h1v19h-1z" fill="#4a484b" />
    </Icon>
    <Grow />
    <button aria-label="Timeline settings"><GearMark size={14} /></button>
  </Timeline>
);

const SystemBar = () => (
  <Taskbar>
    {Object.keys(taskIcons).map((name, i) => (
      <React.Fragment key={name}>
        {i === 3 && <TaskDivider />}
        <TaskItem $open={openApps.includes(name)} $active={name === "Fusion 360"} aria-label={name}>
          {taskIcons[name]}
        </TaskItem>
      </React.Fragment>
    ))}
    <Tray>
      <TrayDivider />
      <TrayItem $width={40}>Desktop</TrayItem>
      <TrayItem $width={13} $raised>»</TrayItem>
      <TrayItem $width={20} aria-label="Hidden icons">
        <Icon w={12}><path d="M1 9l5-5 5 5" stroke="#eee" strokeWidth="1.200" /></Icon>
      </TrayItem>
      <TrayItem $width={19} aria-label="Network">
        <Icon w={14}><path d="M4 2.500h9.500v7H4M8 10v3M5 13h6M.5 3h3v3h-3zM2 6v5h2" stroke="#ddd" /></Icon>
      </TrayItem>
      <TrayItem $width={19} aria-label="Volume">
        <Icon w={14}>
          <path d="M1 5h2l3-3v10L3 9H1z" stroke="#ddd" />
          <path d="M8 5q1 2 0 4M10 3.500q2 3.500 0 7" stroke="#ddd" />
          <path d="M12 2q3 5 0 10" stroke="#777" />
        </Icon>
      </TrayItem>
      <TrayItem $width={19} aria-label="Battery">
        <Icon w={14}><path d="M3 4h9v7H4V8L1 7V3h2zM12 6h2v3h-2z" fill="#ddd" /><path d="M4 6h6" stroke="#222" /></Icon>
      </TrayItem>
      <TrayItem $width={27} aria-label="Pen">
        <Icon w={14}>
          <path d="M3 11L9 2q3-2 3 1l-6 8-3 1zM2 8q-2 4 1 5t4-3q1-3 4-3t1 3-4 0" stroke="#ddd" />
        </Icon>
      </TrayItem>
      <TrayItem $width={28}><span>ENG</span><span>INTL</span></TrayItem>
      <TrayItem $width={56}><span>1:01 PM</span><span>06/18/2023</span></TrayItem>
      <TrayItem $width={40} aria-label="Action center">
        <Icon w={14}><path d="M1 1.500h12v9H9.500L7 13l-2-2.500H1z" stroke="#eee" /></Icon>
      </TrayItem>
      <ShowDesktop aria-label="Show desktop" />
    </Tray>
  </Taskbar>
);

export default function App() {
  return (
    <Screen>
      <GlobalStyle />
      <Header />
      <Documents />
      <Toolbar />
      <Viewport>
        <Model />
        <Browser />
        <Navigation />
        <AssistantButton aria-label="Assistant">
          <Icon w={14}>
            <path d="M7 1a6 6 0 1 0 0 12h6V7a6 6 0 0 0-6-6z" fill="#111" stroke="#fff" />
            <path d="M4 8q4-4 6-2v3M6 9h2" stroke="#fff" strokeWidth="1.500" />
          </Icon>
        </AssistantButton>
      </Viewport>
      <History />
      <SystemBar />
    </Screen>
  );
}
